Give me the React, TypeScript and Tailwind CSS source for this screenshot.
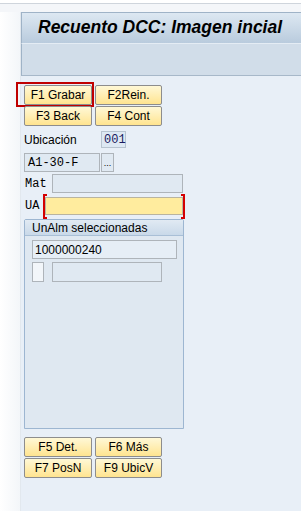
import React from 'react'

const sans = { fontFamily: '"Liberation Sans", Arial, sans-serif' }
const mono = { fontFamily: '"Liberation Mono", "Courier New", monospace' }

function SapButton({ label, focused, w }: { label: string; focused?: boolean; w: string }) {
  return (
    <div
      className={`relative ${w} h-[20px] flex items-center justify-center rounded-[2px] border border-[#8d8d8d] bg-gradient-to-b from-[#fff8d6] to-[#ffe48f] text-[12px] text-black`}
    >
      {focused && (
        <span className="absolute -left-[9px] -top-[4px] -right-[3px] -bottom-[3px] border-2 border-[#c00000]" />
      )}
      {label}
    </div>
  )
}

export default function App() {
  return (
    <div className="w-[301px] h-[511px] bg-white flex flex-col overflow-hidden" style={sans}>
      {/* top strip */}
      <div className="h-[3px] bg-white" />
      <div className="h-[1px] bg-[#cfd5dc]" />
      <div className="h-[8px] bg-[#f4f6f9]" />

      <div className="flex flex-1">
        <div className="w-[21px] bg-gradient-to-r from-white to-[#f3f6f9] border-r border-[#e2e8ee]" />

        <div className="flex-1 flex flex-col bg-[#e8eff7]">
          {/* title */}
          <div className="h-[31px] flex items-center pl-[16px] border-l border-t border-[#9fb3c7] bg-gradient-to-b from-[#dde8f2] to-[#b9cbdd]">
            <span className="text-[17.5px] font-bold italic text-black leading-none">Recuento DCC: Imagen incial</span>
          </div>
          <div className="h-[33px] border-l border-t border-b border-t-[#e4ecf4] border-l-[#9fb3c7] border-b-[#a7b8c9] bg-[#d1dde9]" />

          <div className="flex flex-col pl-[3px] pt-[9px]">
            <div className="grid grid-cols-[68px_67px] gap-x-[3px] gap-y-[1px]">
              <SapButton label="F1 Grabar" focused w="w-[68px]" />
              <SapButton label="F2Rein." w="w-[67px]" />
              <SapButton label="F3 Back" w="w-[68px]" />
              <SapButton label="F4 Cont" w="w-[67px]" />
            </div>

            <div className="flex items-center mt-[5px] h-[17px]">
              <span className="w-[77px] text-[12px] text-black">Ubicación</span>
              <div className="w-[25px] h-[17px] flex items-center pl-[2px] border border-[#b7c3cf] bg-[#dde8f3] text-[12px] text-[#1a1a60]" style={mono}>
                001
              </div>
            </div>

            <div className="flex items-center mt-[5px] gap-[1px]">
              <div className="w-[76px] h-[19px] flex items-center pl-[3px] border border-[#aeb4ba] bg-[#e0e9f2] text-[12px] text-black" style={mono}>
                A1-30-F
              </div>
              <div className="w-[13px] h-[19px] flex items-end justify-center pb-[3px] border border-[#aeb4ba] bg-[#e0e9f2] text-[9px] leading-none text-black">
                ...
              </div>
            </div>

            <div className="flex items-center mt-[2px]">
              <span className="w-[28px] pl-[1px] text-[12px] text-black" style={mono}>Mat</span>
              <div className="w-[131px] h-[19px] border border-[#aeb4ba] bg-[#e0e9f2]" />
            </div>

            <div className="flex items-center mt-[4px]">
              <span className="w-[21px] pl-[1px] text-[12px] text-black" style={mono}>UA</span>
              <div className="relative w-[138px] h-[18px] border border-[#b9b4a0] bg-[#ffec9e]">
                <span className="absolute -left-[3px] -top-[4px] w-[4px] h-[25px] border-l-2 border-t-2 border-b-2 border-[#d40000]" />
                <span className="absolute -right-[3px] -top-[4px] w-[4px] h-[25px] border-r-2 border-t-2 border-b-2 border-[#d40000]" />
              </div>
            </div>

            {/* group box */}
            <div className="mt-[4px] w-[160px] h-[210px] flex flex-col border border-[#9db6d1] rounded-t-[2px] bg-[#dfe8f1]">
              <div className="h-[16px] flex items-center pl-[7px] border-b border-[#a9bfd6] bg-gradient-to-b from-[#e1eaf3] to-[#c9d9e9] text-[12px] text-black">
                UnAlm seleccionadas
              </div>
              <div className="flex flex-col pl-[7px] pt-[4px]">
                <div className="w-[145px] h-[19px] flex items-center pl-[2px] border border-[#aeb4ba] bg-[#e6eef6] text-[12px] text-black">
                  1000000240
                </div>
                <div className="flex items-center mt-[3px]">
                  <div className="w-[12px] h-[20px] border border-[#aeb4ba] bg-[#f2f6fa]" />
                  <div className="ml-[8px] w-[110px] h-[20px] border border-[#aeb4ba] bg-[#e0e9f2]" />
                </div>
              </div>
            </div>

            <div className="mt-[8px] grid grid-cols-[68px_67px] gap-x-[3px] gap-y-[1px]">
              <SapButton label="F5 Det." w="w-[68px]" />
              <SapButton label="F6 Más" w="w-[67px]" />
              <SapButton label="F7 PosN" w="w-[68px]" />
              <SapButton label="F9 UbicV" w="w-[67px]" />
            </div>
          </div>
        </div>
      </div>
    </div>
  )
}
